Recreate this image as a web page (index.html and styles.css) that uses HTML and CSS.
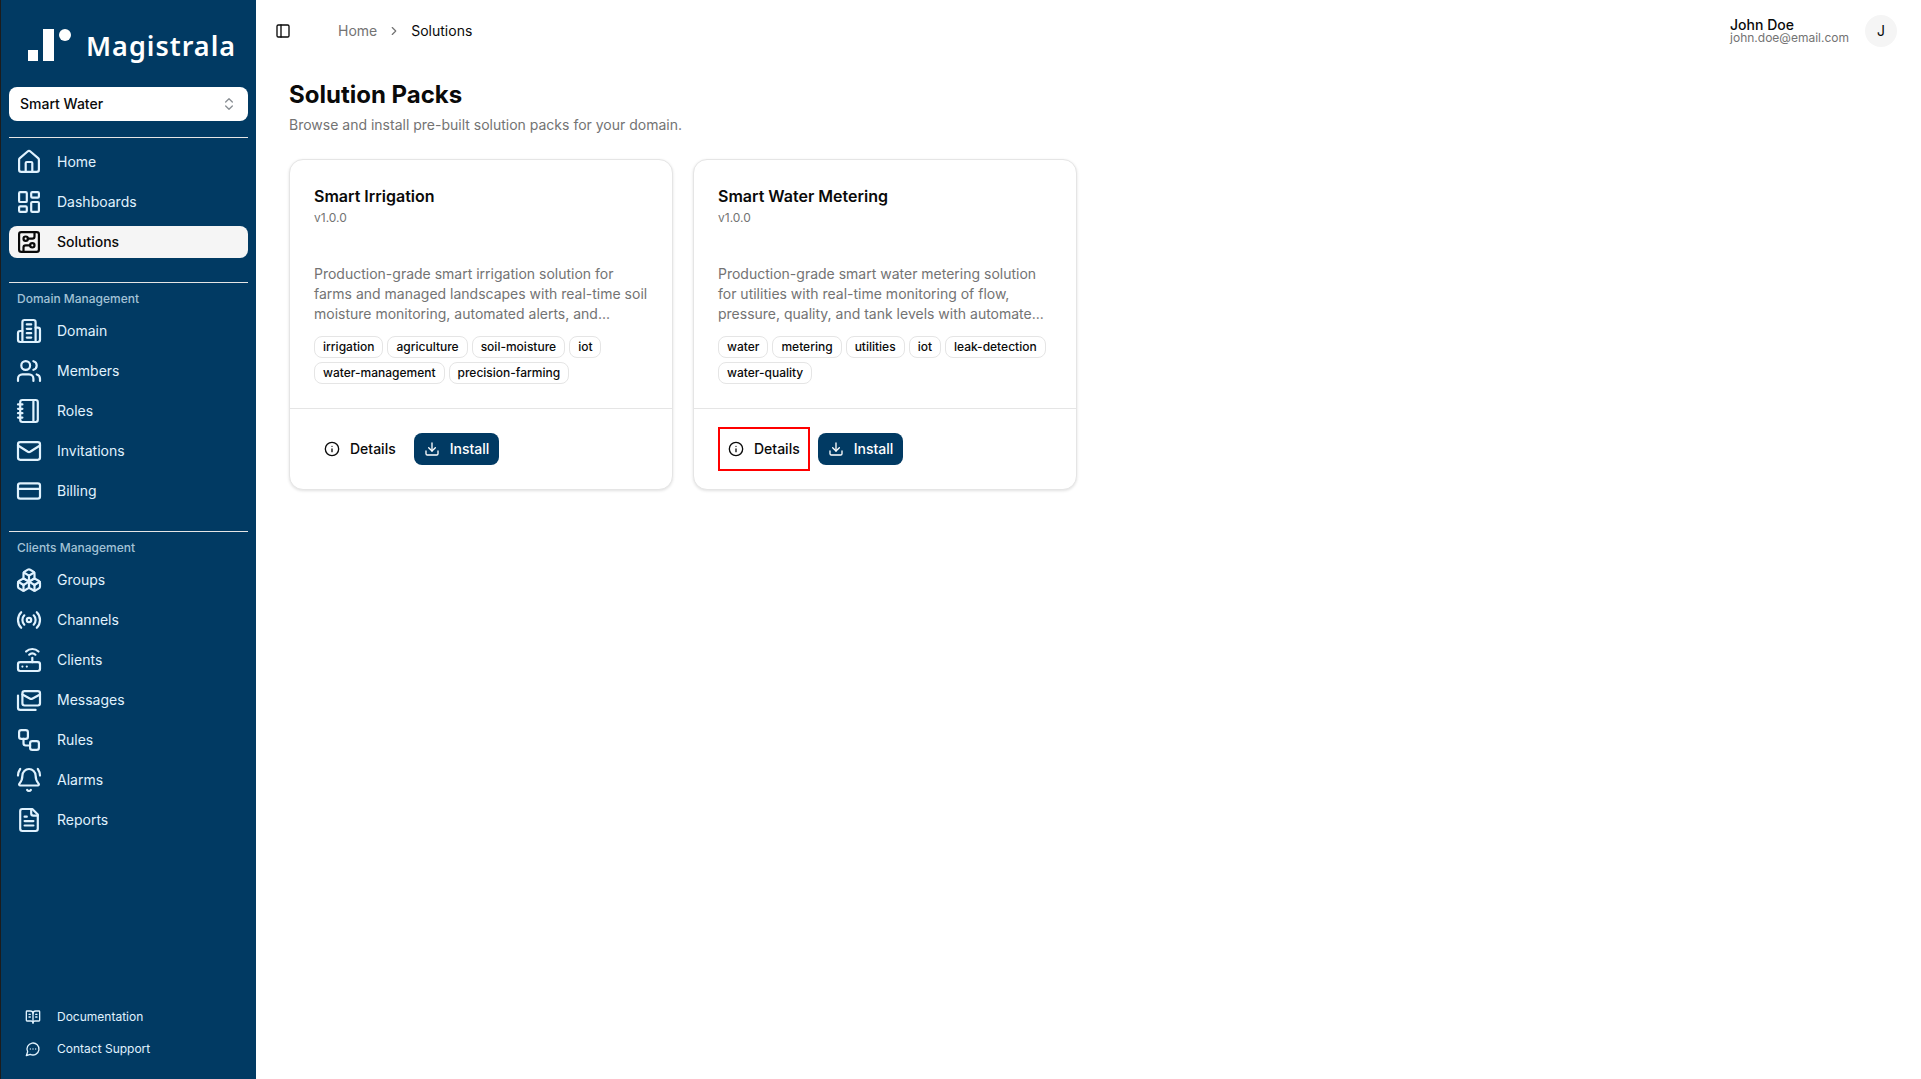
FILE: index.html
```html
<!DOCTYPE html>
<html lang="en">
<head>
<meta charset="utf-8">
<title>Solution Packs</title>
<link rel="stylesheet" href="styles.css">
</head>
<body>
<div class="app">
  <aside class="sidebar">
    <div class="logo">
      <svg class="logo-mark" width="44" height="33" viewBox="0 0 44 33"><rect x="0" y="21" width="10" height="11"/><rect x="15" y="0" width="11" height="32"/><circle cx="37" cy="6" r="6"/></svg>
      <span class="logo-text">Magistrala</span>
    </div>
    <div class="select">
      <span>Smart Water</span>
      <svg class="ic16 muted" viewBox="0 0 24 24"><path d="m7 15 5 5 5-5"/><path d="m7 9 5-5 5 5"/></svg>
    </div>
    <hr class="rule rule-top">
    <nav class="nav">
      <a class="item"><svg class="ic" viewBox="0 0 24 24"><path d="M15 21v-8a1 1 0 0 0-1-1h-4a1 1 0 0 0-1 1v8"/><path d="M3 10a2 2 0 0 1 .709-1.528l7-5.999a2 2 0 0 1 2.582 0l7 5.999A2 2 0 0 1 21 10v9a2 2 0 0 1-2 2H5a2 2 0 0 1-2-2z"/></svg>Home</a>
      <a class="item"><svg class="ic" viewBox="0 0 24 24"><rect width="7" height="9" x="3" y="3" rx="1"/><rect width="7" height="5" x="14" y="3" rx="1"/><rect width="7" height="9" x="14" y="12" rx="1"/><rect width="7" height="5" x="3" y="16" rx="1"/></svg>Dashboards</a>
      <a class="item active"><svg class="ic" viewBox="0 0 24 24"><rect width="18" height="18" x="3" y="3" rx="2"/><path d="M11 9h4a2 2 0 0 0 2-2V3"/><circle cx="9" cy="9" r="2"/><path d="M7 21v-4a2 2 0 0 1 2-2h4"/><circle cx="15" cy="15" r="2"/></svg>Solutions</a>
    </nav>
    <hr class="rule rule-mid">
    <div class="group-label">Domain Management</div>
    <nav class="nav">
      <a class="item"><svg class="ic" viewBox="0 0 24 24"><path d="M6 22V4a2 2 0 0 1 2-2h8a2 2 0 0 1 2 2v18Z"/><path d="M6 12H4a2 2 0 0 0-2 2v6a2 2 0 0 0 2 2h2"/><path d="M18 9h2a2 2 0 0 1 2 2v9a2 2 0 0 1-2 2h-2"/><path d="M10 6h4"/><path d="M10 10h4"/><path d="M10 14h4"/><path d="M10 18h4"/></svg>Domain</a>
      <a class="item"><svg class="ic" viewBox="0 0 24 24"><path d="M16 21v-2a4 4 0 0 0-4-4H6a4 4 0 0 0-4 4v2"/><path d="M16 3.128a4 4 0 0 1 0 7.744"/><path d="M22 21v-2a4 4 0 0 0-3-3.87"/><circle cx="9" cy="7" r="4"/></svg>Members</a>
      <a class="item"><svg class="ic" viewBox="0 0 24 24"><path d="M2 6h4"/><path d="M2 10h4"/><path d="M2 14h4"/><path d="M2 18h4"/><rect width="16" height="20" x="4" y="2" rx="2"/><path d="M16 2v20"/></svg>Roles</a>
      <a class="item"><svg class="ic" viewBox="0 0 24 24"><path d="m22 7-8.991 5.727a2 2 0 0 1-2.009 0L2 7"/><rect x="2" y="4" width="20" height="16" rx="2"/></svg>Invitations</a>
      <a class="item"><svg class="ic" viewBox="0 0 24 24"><rect width="20" height="14" x="2" y="5" rx="2"/><line x1="2" x2="22" y1="10" y2="10"/></svg>Billing</a>
    </nav>
    <hr class="rule rule-mid">
    <div class="group-label">Clients Management</div>
    <nav class="nav">
      <a class="item"><svg class="ic" viewBox="0 0 24 24"><path d="M2.97 12.92A2 2 0 0 0 2 14.63v3.24a2 2 0 0 0 .97 1.71l3 1.8a2 2 0 0 0 2.06 0L12 19v-5.5l-5-3-4.03 2.42Z"/><path d="m7 16.5-4.74-2.85"/><path d="m7 16.5 5-3"/><path d="M7 16.5v5.17"/><path d="M12 13.5V19l3.97 2.38a2 2 0 0 0 2.06 0l3-1.8a2 2 0 0 0 .97-1.71v-3.24a2 2 0 0 0-.97-1.71L17 10.5l-5 3Z"/><path d="m17 16.5-5-3"/><path d="m17 16.5 4.74-2.85"/><path d="M17 16.5v5.17"/><path d="M7.97 4.42A2 2 0 0 0 7 6.13v4.37l5 3 5-3V6.13a2 2 0 0 0-.97-1.71l-3-1.8a2 2 0 0 0-2.06 0l-3 1.8Z"/><path d="M12 8 7.26 5.15"/><path d="m12 8 4.74-2.85"/><path d="M12 13.5V8"/></svg>Groups</a>
      <a class="item"><svg class="ic" viewBox="0 0 24 24"><path d="M16.247 7.761a6 6 0 0 1 0 8.478"/><path d="M19.075 4.933a10 10 0 0 1 0 14.134"/><path d="M4.925 19.067a10 10 0 0 1 0-14.134"/><path d="M7.753 16.239a6 6 0 0 1 0-8.478"/><circle cx="12" cy="12" r="2"/></svg>Channels</a>
      <a class="item"><svg class="ic" viewBox="0 0 24 24"><rect width="20" height="8" x="2" y="14" rx="2"/><path d="M6.01 18H6"/><path d="M10.01 18H10"/><path d="M15 10v4"/><path d="M17.84 7.17a4 4 0 0 0-5.66 0"/><path d="M20.66 4.34a8 8 0 0 0-11.31 0"/></svg>Clients</a>
      <a class="item"><svg class="ic" viewBox="0 0 24 24"><rect width="16" height="13" x="6" y="4" rx="2"/><path d="m22 7-7.1 3.78c-.57.3-1.23.3-1.8 0L6 7"/><path d="M2 8v11c0 1.1.9 2 2 2h14"/></svg>Messages</a>
      <a class="item"><svg class="ic" viewBox="0 0 24 24"><rect width="8" height="8" x="3" y="3" rx="2"/><path d="M7 11v4a2 2 0 0 0 2 2h4"/><rect width="8" height="8" x="13" y="13" rx="2"/></svg>Rules</a>
      <a class="item"><svg class="ic" viewBox="0 0 24 24"><path d="M10.268 21a2 2 0 0 0 3.464 0"/><path d="M22 8c0-2.3-.8-4.3-2-6"/><path d="M3.262 15.326A1 1 0 0 0 4 17h16a1 1 0 0 0 .74-1.673C19.41 13.956 18 12.499 18 8A6 6 0 0 0 6 8c0 4.499-1.411 5.956-2.738 7.326"/><path d="M4 2C2.8 3.7 2 5.7 2 8"/></svg>Alarms</a>
      <a class="item"><svg class="ic" viewBox="0 0 24 24"><path d="M15 2H6a2 2 0 0 0-2 2v16a2 2 0 0 0 2 2h12a2 2 0 0 0 2-2V7Z"/><path d="M14 2v4a2 2 0 0 0 2 2h4"/><path d="M10 9H8"/><path d="M16 13H8"/><path d="M16 17H8"/></svg>Reports</a>
    </nav>
    <div class="side-foot">
      <a class="foot-item"><svg class="ic16" viewBox="0 0 24 24"><path d="M12 7v14"/><path d="M16 12h2"/><path d="M16 8h2"/><path d="M3 18a1 1 0 0 1-1-1V4a1 1 0 0 1 1-1h5a4 4 0 0 1 4 4 4 4 0 0 1 4-4h5a1 1 0 0 1 1 1v13a1 1 0 0 1-1 1h-6a3 3 0 0 0-3 3 3 3 0 0 0-3-3z"/><path d="M6 12h2"/><path d="M6 8h2"/></svg>Documentation</a>
      <a class="foot-item"><svg class="ic16" viewBox="0 0 24 24"><path d="M7.9 20A9 9 0 1 0 4 16.1L2 22Z"/><path d="M8 12h.01"/><path d="M12 12h.01"/><path d="M16 12h.01"/></svg>Contact Support</a>
    </div>
  </aside>
  <div class="main">
    <header class="topbar">
      <div class="crumbs">
        <svg class="ic16 toggle" viewBox="0 0 24 24"><rect width="18" height="18" x="3" y="3" rx="2"/><path d="M9 3v18"/></svg>
        <span class="crumb">Home</span>
        <svg class="chev" viewBox="0 0 24 24"><path d="m9 18 6-6-6-6"/></svg>
        <span class="crumb-now">Solutions</span>
      </div>
      <div class="user">
        <div class="user-text">
          <span class="user-name">John Doe</span>
          <span class="user-mail">john.doe@email.com</span>
        </div>
        <div class="avatar">J</div>
      </div>
    </header>
    <main class="content">
      <h1 class="title">Solution Packs</h1>
      <p class="subtitle">Browse and install pre-built solution packs for your domain.</p>
      <div class="cards">
        <article class="card">
          <div class="card-body">
            <h2 class="card-title">Smart Irrigation</h2>
            <div class="version">v1.0.0</div>
            <p class="desc">Production-grade smart irrigation solution for farms and managed landscapes with real-time soil moisture monitoring, automated alerts, and...</p>
            <div class="tags">
              <span class="tag">irrigation</span><span class="tag">agriculture</span><span class="tag">soil-moisture</span><span class="tag">iot</span><span class="tag">water-management</span><span class="tag">precision-farming</span>
            </div>
          </div>
          <div class="card-foot">
            <button class="btn btn-ghost"><svg class="ic16" viewBox="0 0 24 24"><circle cx="12" cy="12" r="10"/><path d="M12 16v-4"/><path d="M12 8h.01"/></svg>Details</button>
            <button class="btn btn-primary"><svg class="ic16" viewBox="0 0 24 24"><path d="M12 15V3"/><path d="M21 15v4a2 2 0 0 1-2 2H5a2 2 0 0 1-2-2v-4"/><path d="m7 10 5 5 5-5"/></svg>Install</button>
          </div>
        </article>
        <article class="card">
          <div class="card-body">
            <h2 class="card-title">Smart Water Metering</h2>
            <div class="version">v1.0.0</div>
            <p class="desc">Production-grade smart water metering solution for utilities with real-time monitoring of flow, pressure, quality, and tank levels with automate...</p>
            <div class="tags">
              <span class="tag">water</span><span class="tag">metering</span><span class="tag">utilities</span><span class="tag">iot</span><span class="tag">leak-detection</span><span class="tag">water-quality</span>
            </div>
          </div>
          <div class="card-foot">
            <button class="btn btn-ghost marked"><svg class="ic16" viewBox="0 0 24 24"><circle cx="12" cy="12" r="10"/><path d="M12 16v-4"/><path d="M12 8h.01"/></svg>Details</button>
            <button class="btn btn-primary"><svg class="ic16" viewBox="0 0 24 24"><path d="M12 15V3"/><path d="M21 15v4a2 2 0 0 1-2 2H5a2 2 0 0 1-2-2v-4"/><path d="m7 10 5 5 5-5"/></svg>Install</button>
          </div>
        </article>
      </div>
    </main>
  </div>
</div>
</body>
</html>
```
FILE: styles.css
```css
* { box-sizing: border-box; }
html, body { margin: 0; height: 100%; }
body { font-family: Inter, "Liberation Sans", sans-serif; font-size: 14px; color: #0a0a0a; background: #fff; overflow: hidden; }
svg { flex: none; fill: none; stroke: currentColor; stroke-width: 2; stroke-linecap: round; stroke-linejoin: round; }
.app { display: flex; height: 100vh; }

.sidebar { width: 256px; flex: none; height: 100%; display: flex; flex-direction: column; background: #013a63; border-left: 1px solid #1c1c1c; color: #e0f2fe; padding: 0 8px; }
.logo { height: 87px; display: flex; align-items: flex-start; padding: 29px 0 0 19px; gap: 14px; }
.logo-mark { fill: #fff; stroke: none; }
.logo-text { font-family: "Noto Sans", sans-serif; font-weight: 600; font-size: 27px; line-height: 32px; letter-spacing: 1px; color: #fff; margin-top: 1px; }
.select { height: 34px; width: 239px; background: #fff; color: #0a0a0a; border-radius: 8px; display: flex; align-items: center; justify-content: space-between; padding: 0 11px 2px 11px; font-weight: 500; }
.select svg { margin-top: 2px; }
.muted { color: #8a8f94; }
.rule { border: 0; height: 1px; background: #e5e5e5; width: 239px; margin: 0; }
.rule-top { margin: 16px 0 8px; }
.rule-mid { margin: 24px 0 8px; }
.nav { display: flex; flex-direction: column; gap: 8px; width: 239px; }
.group-label { font-size: 12px; line-height: 16px; font-weight: 500; color: #a3c2d6; padding-left: 8px; margin-bottom: 8px; }
.item { height: 32px; display: flex; align-items: center; gap: 16px; padding: 0 0 2px 8px; border-radius: 8px; }
.item.active { background: #f5f5f5; color: #0a0a0a; font-weight: 500; }
.ic { width: 24px; height: 24px; margin-top: 2px; transform: scale(1.1); }
.ic16 { width: 16px; height: 16px; }
.side-foot { margin-top: auto; padding-bottom: 14px; display: flex; flex-direction: column; }
.foot-item { height: 32px; display: flex; align-items: center; gap: 16px; padding: 0 0 2px 16px; font-size: 12px; }
.foot-item svg { margin-top: 2px; }

.main { flex: 1; min-width: 0; display: flex; flex-direction: column; }
.topbar { height: 61px; flex: none; display: flex; align-items: center; justify-content: space-between; padding: 0 24px 0 19px; }
.crumbs { display: flex; align-items: center; }
.toggle { margin-right: 47px; }
.crumb { color: #737373; }
.chev { width: 14px; height: 14px; color: #737373; margin: 0 10px; }
.crumb-now { color: #0a0a0a; }
.user { display: flex; align-items: center; gap: 16px; }
.user-text { display: flex; flex-direction: column; }
.user-name { font-size: 14px; line-height: 14px; font-weight: 500; }
.user-mail { font-size: 12px; line-height: 12px; color: #737373; }
.avatar { width: 32px; height: 32px; border-radius: 50%; background: #f5f5f5; display: flex; align-items: center; justify-content: center; font-size: 14px; }

.content { padding: 18px 32px 0 33px; }
.title { margin: 0; font-size: 24px; line-height: 32px; font-weight: 700; }
.subtitle { margin: 4px 0 0; font-size: 14px; line-height: 20px; color: #737373; }
.cards { display: grid; grid-template-columns: repeat(4, 384px); gap: 20px; margin-top: 24px; }
.card { border: 1px solid #e5e5e5; border-radius: 14px; box-shadow: 0 1px 3px rgba(0,0,0,.12); background: #fff; }
.card-body { padding: 24px 24px 24px; border-bottom: 1px solid #e5e5e5; }
.card-title { margin: 0; font-size: 16px; line-height: 24px; font-weight: 600; }
.version { margin-top: 2px; font-size: 12px; line-height: 16px; color: #737373; }
.desc { margin: 38px 0 12px; font-size: 14px; line-height: 20px; color: #737373; }
.tags { display: flex; flex-wrap: wrap; gap: 4px; }
.tag { height: 22px; padding: 2px 8px; border: 1px solid #e5e5e5; border-radius: 8px; font-size: 12px; line-height: 16px; font-weight: 500; }
.card-foot { padding: 24px; display: flex; gap: 8px; }
.btn { height: 32px; display: inline-flex; align-items: center; gap: 10px; padding: 0 10px 2px; border: 0; border-radius: 8px; font: 500 14px Inter, sans-serif; background: none; color: #0a0a0a; }
.btn svg { margin-top: 2px; }
.btn-primary { background: #013a63; color: #fff; }
.marked { position: relative; }
.marked::after { content: ""; position: absolute; inset: -6px 0; border: 2px solid #f00; }
```
